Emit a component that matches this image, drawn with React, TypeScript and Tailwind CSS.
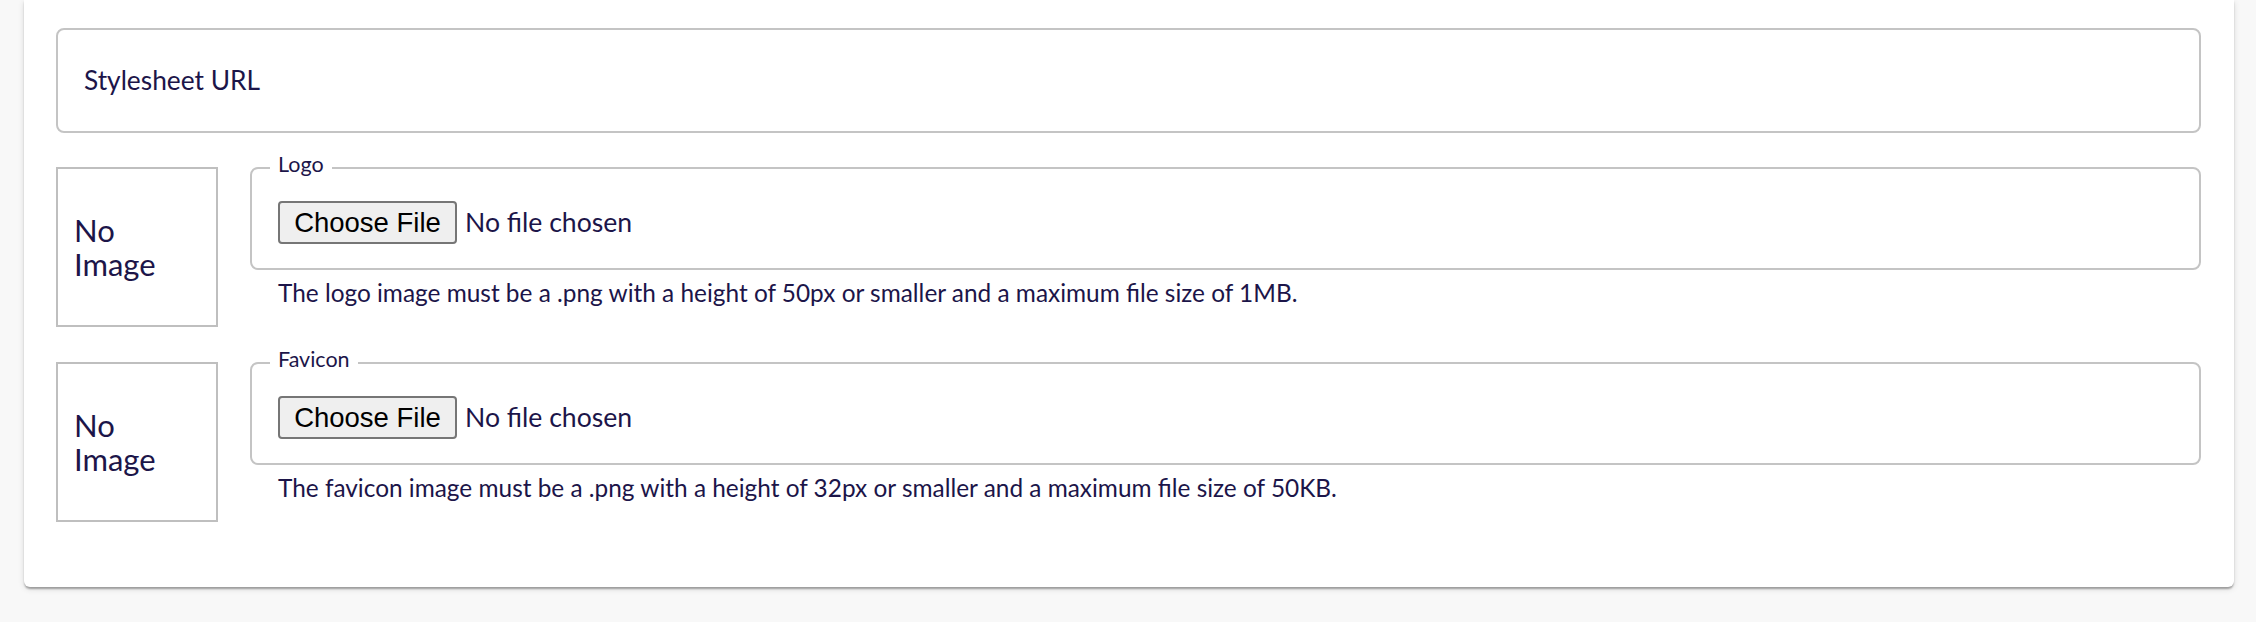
import React from 'react';

const uploads = [
  {
    label: 'Logo',
    help: 'The logo image must be a .png with a height of 50px or smaller and a maximum file size of 1MB.',
  },
  {
    label: 'Favicon',
    help: 'The favicon image must be a .png with a height of 32px or smaller and a maximum file size of 50KB.',
  },
];

export default function App() {
  return (
    <div className="min-h-screen bg-[#f8f8f8] pl-[24px] pr-[22px] font-['Lato',sans-serif] text-[#1c1549]">
      <div className="bg-white rounded-b-[6px] shadow-[0_3px_2px_-1px_rgba(0,0,0,0.2),0_2px_2px_0_rgba(0,0,0,0.14),0_2px_6px_0_rgba(0,0,0,0.12)] pl-[32px] pr-[33px] pt-[28px] pb-[65px]">
        {/* Stylesheet URL */}
        <div className="h-[105px] border-2 border-[#c4c4c4] rounded-[8px] flex items-center pl-[26px]">
          <span className="text-[26.3px] leading-none">Stylesheet URL</span>
        </div>

        {/* Uploads */}
        {uploads.map((u, i) => (
          <div key={i} className={`flex items-start gap-[32px] ${i === 0 ? 'mt-[34px]' : 'mt-[35px]'}`}>
            <div className="w-[162px] h-[160px] shrink-0 border-2 border-[#bfbfbf] flex items-center pl-[16px]">
              <span className="text-[31px] leading-[34px]">
                No
                <br />
                Image
              </span>
            </div>
            <div className="flex-1">
              <label className="relative block h-[103px] border-2 border-[#c4c4c4] rounded-[8px] pl-[26px] pt-[32px]">
                <span className="absolute -top-[19px] left-[18px] bg-white px-[8px] text-[21.5px] leading-[28px]">
                  {u.label}
                </span>
                <input type="file" className="hidden" />
                <span className="flex items-center">
                  <span className="h-[43px] w-[179px] flex items-center justify-center rounded-[4px] border-2 border-[#767676] bg-[#efefef] font-['Liberation_Sans',Arial,sans-serif] text-[27.5px] text-black">
                    Choose File
                  </span>
                  <span className="ml-[8px] text-[26.6px]">No file chosen</span>
                </span>
              </label>
              <p className="mt-[7px] pl-[28px] text-[24.4px] leading-[32px]">{u.help}</p>
            </div>
          </div>
        ))}
      </div>
    </div>
  );
}
